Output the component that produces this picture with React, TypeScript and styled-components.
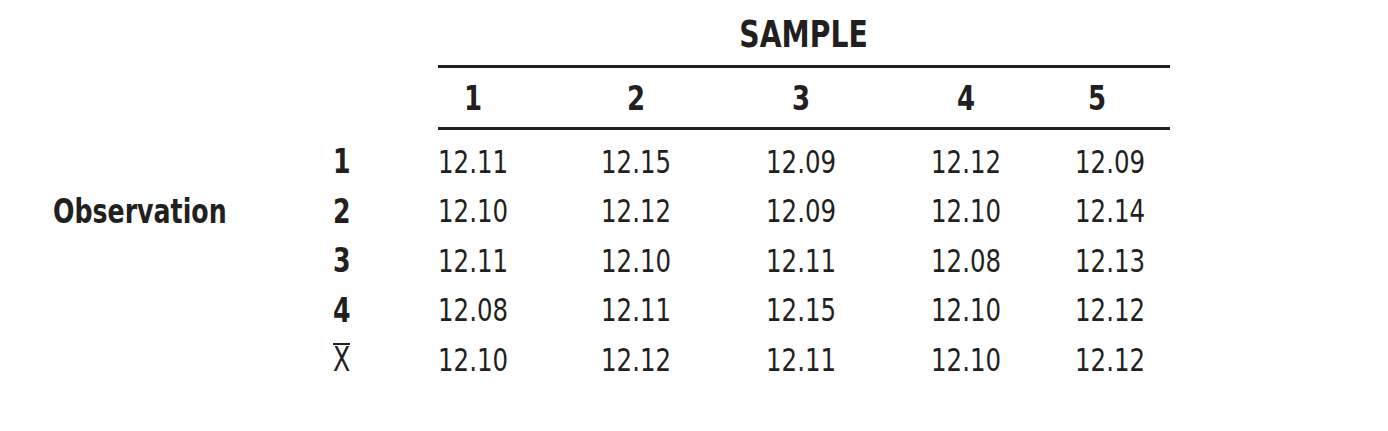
import React from 'react'
import styled, { createGlobalStyle } from 'styled-components'

const GlobalStyle = createGlobalStyle`
  html, body {
    margin: 0;
    padding: 0;
    background: #ffffff;
  }
  body {
    font-family: "DejaVu Sans Condensed", "DejaVu Sans", "Liberation Sans", sans-serif;
    font-stretch: condensed;
    color: #231f20;
  }
`

// the reference face is a narrow grotesque; squeeze the condensed face a bit more
const Narrow = styled.span<{ $origin?: string }>`
  display: inline-block;
  white-space: nowrap;
  transform: scaleX(0.85);
  transform-origin: ${(p) => p.$origin ?? 'left'} center;
`

const Table = styled.div`
  display: grid;
  grid-template-columns: 280px 105px 163px 165px 165px 144px 95px;
  margin-left: 53px;
  width: 1117px;
`

const Title = styled.div`
  grid-column: 3 / 8;
  height: 62px;
  padding-top: 3px;
  display: flex;
  align-items: center;
  justify-content: center;
  border-bottom: 3px solid #231f20;
  font-size: 37px;
  font-weight: 700;
`

const HeadCell = styled.div<{ $shift?: number; $first?: boolean }>`
  grid-column: ${(p) => (p.$first ? '3' : 'auto')};
  height: 59px;
  display: flex;
  align-items: center;
  border-bottom: 3px solid #231f20;
  font-size: 34px;
  font-weight: 700;
  & > span {
    width: 70px;
    text-align: center;
    margin-left: ${(p) => p.$shift ?? 0}px;
  }
`

const Spacer = styled.div`
  grid-column: 1 / 8;
  height: 7px;
`

const Cell = styled.div`
  height: 49.5px;
  display: flex;
  align-items: center;
  font-size: 32px;
`

const GroupLabel = styled(Cell)`
  font-weight: 700;
  font-size: 33px;
`

const RowLabel = styled(Cell)`
  font-weight: 700;
  font-size: 33px;
`

const Bar = styled.span`
  display: inline-block;
  font-weight: 400;
  border-top: 2px solid #231f20;
  line-height: 30px;
  margin-top: -4px;
`

const rows: { label: React.ReactNode; values: string[] }[] = [
  { label: '1', values: ['12.11', '12.15', '12.09', '12.12', '12.09'] },
  { label: '2', values: ['12.10', '12.12', '12.09', '12.10', '12.14'] },
  { label: '3', values: ['12.11', '12.10', '12.11', '12.08', '12.13'] },
  { label: '4', values: ['12.08', '12.11', '12.15', '12.10', '12.12'] },
  { label: <Bar>X</Bar>, values: ['12.10', '12.12', '12.11', '12.10', '12.12'] },
]

const App = () => {
  return (
    <>
      <GlobalStyle />
      <Table>
        <Title>
          <Narrow $origin="center">SAMPLE</Narrow>
        </Title>
        {[1, 2, 3, 4, 5].map((n) => (
          <HeadCell key={n} $first={n === 1} $shift={n === 5 ? -13 : 0}>
            <Narrow $origin="center">{n}</Narrow>
          </HeadCell>
        ))}
        <Spacer />
        {rows.map((row, i) => (
          <React.Fragment key={i}>
            <GroupLabel>{i === 1 ? <Narrow>Observation</Narrow> : ''}</GroupLabel>
            <RowLabel>
              <Narrow>{row.label}</Narrow>
            </RowLabel>
            {row.values.map((v, j) => (
              <Cell key={j}>
                <Narrow>{v}</Narrow>
              </Cell>
            ))}
          </React.Fragment>
        ))}
      </Table>
    </>
  )
}

export default App
